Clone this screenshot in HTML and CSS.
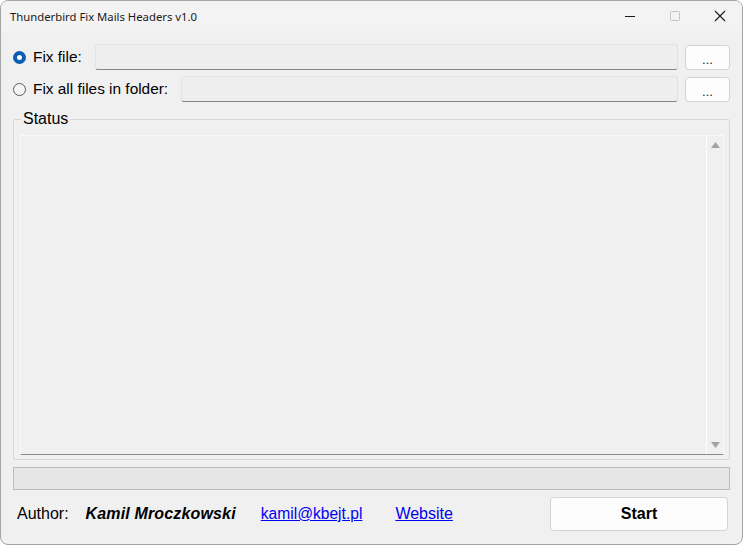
FILE: index.html
```html
<!DOCTYPE html>
<html>
<head>
<meta charset="utf-8">
<link rel="stylesheet" href="styles.css">
</head>
<body>
<div class="window">
  <div class="titlebar">
    <span class="title">Thunderbird Fix Mails Headers v1.0</span>
    <div class="controls">
      <span class="ctl"><svg width="12" height="12" viewBox="0 0 12 12"><path d="M1 6.5h10" stroke="#1a1a1a" stroke-width="1"/></svg></span>
      <span class="ctl"><svg width="12" height="12" viewBox="0 0 12 12"><rect x="1.5" y="1.5" width="9" height="9" rx="1" fill="none" stroke="#c4c4c4" stroke-width="1"/></svg></span>
      <span class="ctl"><svg width="12" height="12" viewBox="0 0 12 12"><path d="M1 1L11 11M11 1L1 11" stroke="#1a1a1a" stroke-width="1.1"/></svg></span>
    </div>
  </div>
  <div class="content">
    <div class="row">
      <span class="radio checked"></span>
      <span class="label">Fix file:</span>
      <span class="textbox"></span>
      <span class="btn small">...</span>
    </div>
    <div class="row">
      <span class="radio"></span>
      <span class="label">Fix all files in folder:</span>
      <span class="textbox"></span>
      <span class="btn small">...</span>
    </div>
    <fieldset class="group">
      <legend class="legend">Status</legend>
      <div class="log">
        <div class="logbody"></div>
        <div class="scroll">
          <svg width="9" height="6" viewBox="0 0 9 6"><path d="M4.5 0L9 6H0z" fill="#a3a3a3"/></svg>
          <svg width="9" height="6" viewBox="0 0 9 6"><path d="M0 0H9L4.5 6z" fill="#a3a3a3"/></svg>
        </div>
      </div>
    </fieldset>
    <div class="progress"></div>
    <div class="footer">
      <span class="author">Author:</span>
      <span class="name">Kamil Mroczkowski</span>
      <a class="link email" href="#">kamil@kbejt.pl</a>
      <a class="link site" href="#">Website</a>
      <span class="btn start">Start</span>
    </div>
  </div>
</div>
</body>
</html>
```
FILE: styles.css
```css
html, body {
  margin: 0;
  padding: 0;
  background: #ffffff;
}
.window {
  width: 743px;
  height: 545px;
  box-sizing: border-box;
  border: 1px solid #a4a4a4;
  border-radius: 8px;
  overflow: hidden;
  background: #f0f0f0;
  display: flex;
  flex-direction: column;
  font-family: "Liberation Sans", Arial, sans-serif;
  color: #000;
}
.titlebar {
  height: 30px;
  flex: none;
  background: #f3f3f3;
  display: flex;
  align-items: center;
  padding-left: 9px;
}
.title {
  font-family: "Noto Sans", sans-serif;
  font-size: 11.3px;
  color: #1a1a1a;
  flex: 1;
}
.controls {
  display: flex;
  height: 100%;
}
.ctl {
  width: 45px;
  height: 100%;
  display: flex;
  align-items: center;
  justify-content: center;
}
.content {
  flex: 1;
  display: flex;
  flex-direction: column;
  padding: 13px 12px 0 12px;
}
.row {
  display: flex;
  align-items: center;
  height: 26px;
  margin-bottom: 6px;
}
.radio {
  width: 11px;
  height: 11px;
  border: 1px solid #5a5a5a;
  border-radius: 50%;
  box-sizing: content-box;
  background: #f5f5f5;
  flex: none;
}
.radio.checked {
  width: 5px;
  height: 5px;
  border: 4px solid #0a5fb4;
  background: #ffffff;
}
.label {
  font-size: 15.4px;
  margin-left: 7px;
  margin-right: 13px;
  flex: none;
}
.textbox {
  flex: 1;
  height: 26px;
  box-sizing: border-box;
  background: #eeeeee;
  border: 1px solid #e2e2e2;
  border-bottom: 1px solid #858585;
  border-radius: 3px;
}
.btn {
  box-sizing: border-box;
  background: #fdfdfd;
  border: 1px solid #d3d3d3;
  border-radius: 4px;
  display: flex;
  align-items: center;
  justify-content: center;
  font-size: 13px;
  color: #1a1a1a;
}
.btn.small {
  width: 45px;
  height: 25px;
  margin-left: 7px;
  padding-top: 5px;
  flex: none;
}
.group {
  margin: 2px 0 0 0;
  padding: 0 5px 4px 6px;
  border: 1px solid #d8d8d8;
  border-radius: 2px;
  min-width: 0;
}
.legend {
  font-size: 16px;
  padding: 0 2px;
  margin-left: 1px;
  line-height: 18px;
}
.log {
  height: 320px;
  box-sizing: border-box;
  margin-top: 7px;
  display: flex;
  border: 1px solid #f9f9f9;
  border-bottom: 1px solid #8a8a8a;
  background: #f0f0f0;
}
.logbody {
  flex: 1;
}
.scroll {
  width: 16px;
  border-left: 1px solid #ffffff;
  display: flex;
  flex-direction: column;
  justify-content: space-between;
  align-items: center;
  padding: 6px 0 6px 0;
}
.progress {
  margin-top: 7px;
  height: 23px;
  box-sizing: border-box;
  background: #e6e6e6;
  border: 1px solid #bcbcbc;
}
.footer {
  display: flex;
  align-items: center;
  margin-top: 7px;
  height: 34px;
  font-size: 16px;
}
.author {
  margin-left: 4px;
}
.name {
  font-weight: bold;
  font-style: italic;
  margin-left: 17px;
  letter-spacing: 0.15px;
}
.link {
  color: #0000f0;
  text-decoration: underline;
}
.email {
  margin-left: 25px;
  font-size: 15.6px;
}
.site {
  margin-left: 33px;
}
.btn.start {
  margin-left: auto;
  margin-right: 2px;
  width: 178px;
  height: 34px;
  font-size: 16px;
  font-weight: bold;
  color: #000;
}
```
